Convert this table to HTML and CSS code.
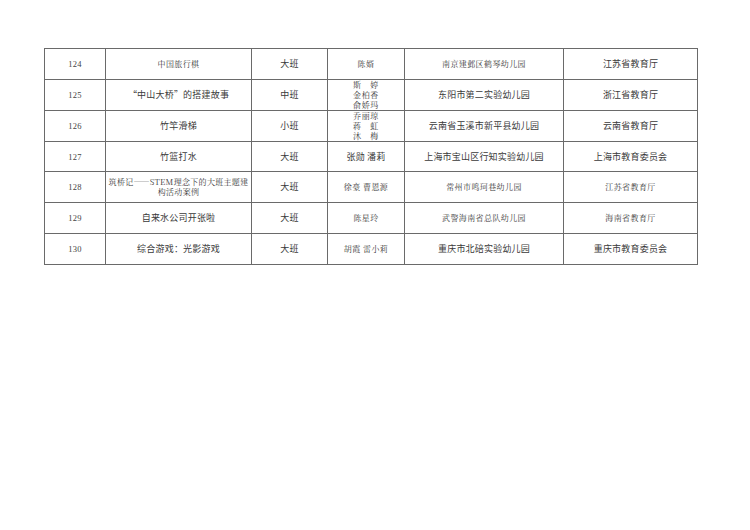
FILE: index.html
```html
<!DOCTYPE html>
<html lang="zh-CN">
<head>
<meta charset="utf-8">
<title>名单</title>
<link rel="stylesheet" href="styles.css">
</head>
<body>
<table class="list">
  <colgroup>
    <col class="c-no"><col class="c-title"><col class="c-class"><col class="c-name"><col class="c-school"><col class="c-dept">
  </colgroup>
  <tbody>
    <tr class="r31">
      <td class="num">124</td><td class="s">中国旅行棋</td><td>大班</td><td class="s">陈婿</td><td class="s">南京建邺区鹤琴幼儿园</td><td>江苏省教育厅</td>
    </tr>
    <tr class="r31">
      <td class="num">125</td><td>“中山大桥”的搭建故事</td><td>中班</td><td class="s names"><span class="ln">斯　婷</span><span class="ln">金柏香</span><span class="ln">俞娇玛</span></td><td>东阳市第二实验幼儿园</td><td>浙江省教育厅</td>
    </tr>
    <tr class="r30">
      <td class="num">126</td><td>竹竿滑梯</td><td>小班</td><td class="s names"><span class="ln">乔丽琼</span><span class="ln">蒋　虹</span><span class="ln">沐　梅</span></td><td>云南省玉溪市新平县幼儿园</td><td>云南省教育厅</td>
    </tr>
    <tr class="r30">
      <td class="num">127</td><td>竹篮打水</td><td>大班</td><td>张勋 潘莉</td><td>上海市宝山区行知实验幼儿园</td><td>上海市教育委员会</td>
    </tr>
    <tr class="r31">
      <td class="num">128</td><td class="s two">筑桥记——STEM理念下的大班主题建<br>构活动案例</td><td>大班</td><td class="s">徐豪 曹恩源</td><td class="s">常州市鸣珂巷幼儿园</td><td class="s">江苏省教育厅</td>
    </tr>
    <tr class="r31">
      <td class="num">129</td><td>自来水公司开张啦</td><td>大班</td><td class="s">陈星玲</td><td class="s">武警海南省总队幼儿园</td><td class="s">海南省教育厅</td>
    </tr>
    <tr class="r31">
      <td class="num">130</td><td>综合游戏：光影游戏</td><td>大班</td><td class="s">胡霞 雷小莉</td><td>重庆市北碚实验幼儿园</td><td>重庆市教育委员会</td>
    </tr>
  </tbody>
</table>
</body>
</html>
```
FILE: styles.css
```css
html, body {
  margin: 0;
  padding: 0;
  background: #fff;
}
body {
  width: 750px;
  height: 530px;
  overflow: hidden;
  font-family: "Noto Sans CJK SC", "Noto Sans", sans-serif;
}
.list {
  border-collapse: collapse;
  table-layout: fixed;
  width: 653px;
  margin: 48px 0 0 44px;
}
.c-no { width: 61px; }
.c-title { width: 146px; }
.c-class { width: 76px; }
.c-name { width: 77px; }
.c-school { width: 159px; }
.c-dept { width: 134px; }
.list td {
  border: 1px solid #6a6a6a;
  padding: 0;
  text-align: center;
  vertical-align: middle;
  font-size: 9px;
  line-height: 10px;
  color: #3a3a3a;
  letter-spacing: 0.2px;
  white-space: nowrap;
  overflow: visible;
}
.r31 { height: 31px; }
.r30 { height: 30px; }
.list td.s {
  font-family: "Noto Serif CJK SC", "Noto Sans CJK SC", serif;
  font-size: 8px;
  letter-spacing: 0.4px;
  color: #383838;
}
.list td.num {
  font-family: "Liberation Serif", serif;
  font-size: 8.5px;
  color: #444;
  letter-spacing: 0.2px;
}
.list td.names {
  font-size: 8px;
  letter-spacing: 0.6px;
}
.ln {
  display: block;
  height: 10px;
  line-height: 10px;
}
.list td.two {
  line-height: 10px;
  letter-spacing: 0.3px;
}
```
